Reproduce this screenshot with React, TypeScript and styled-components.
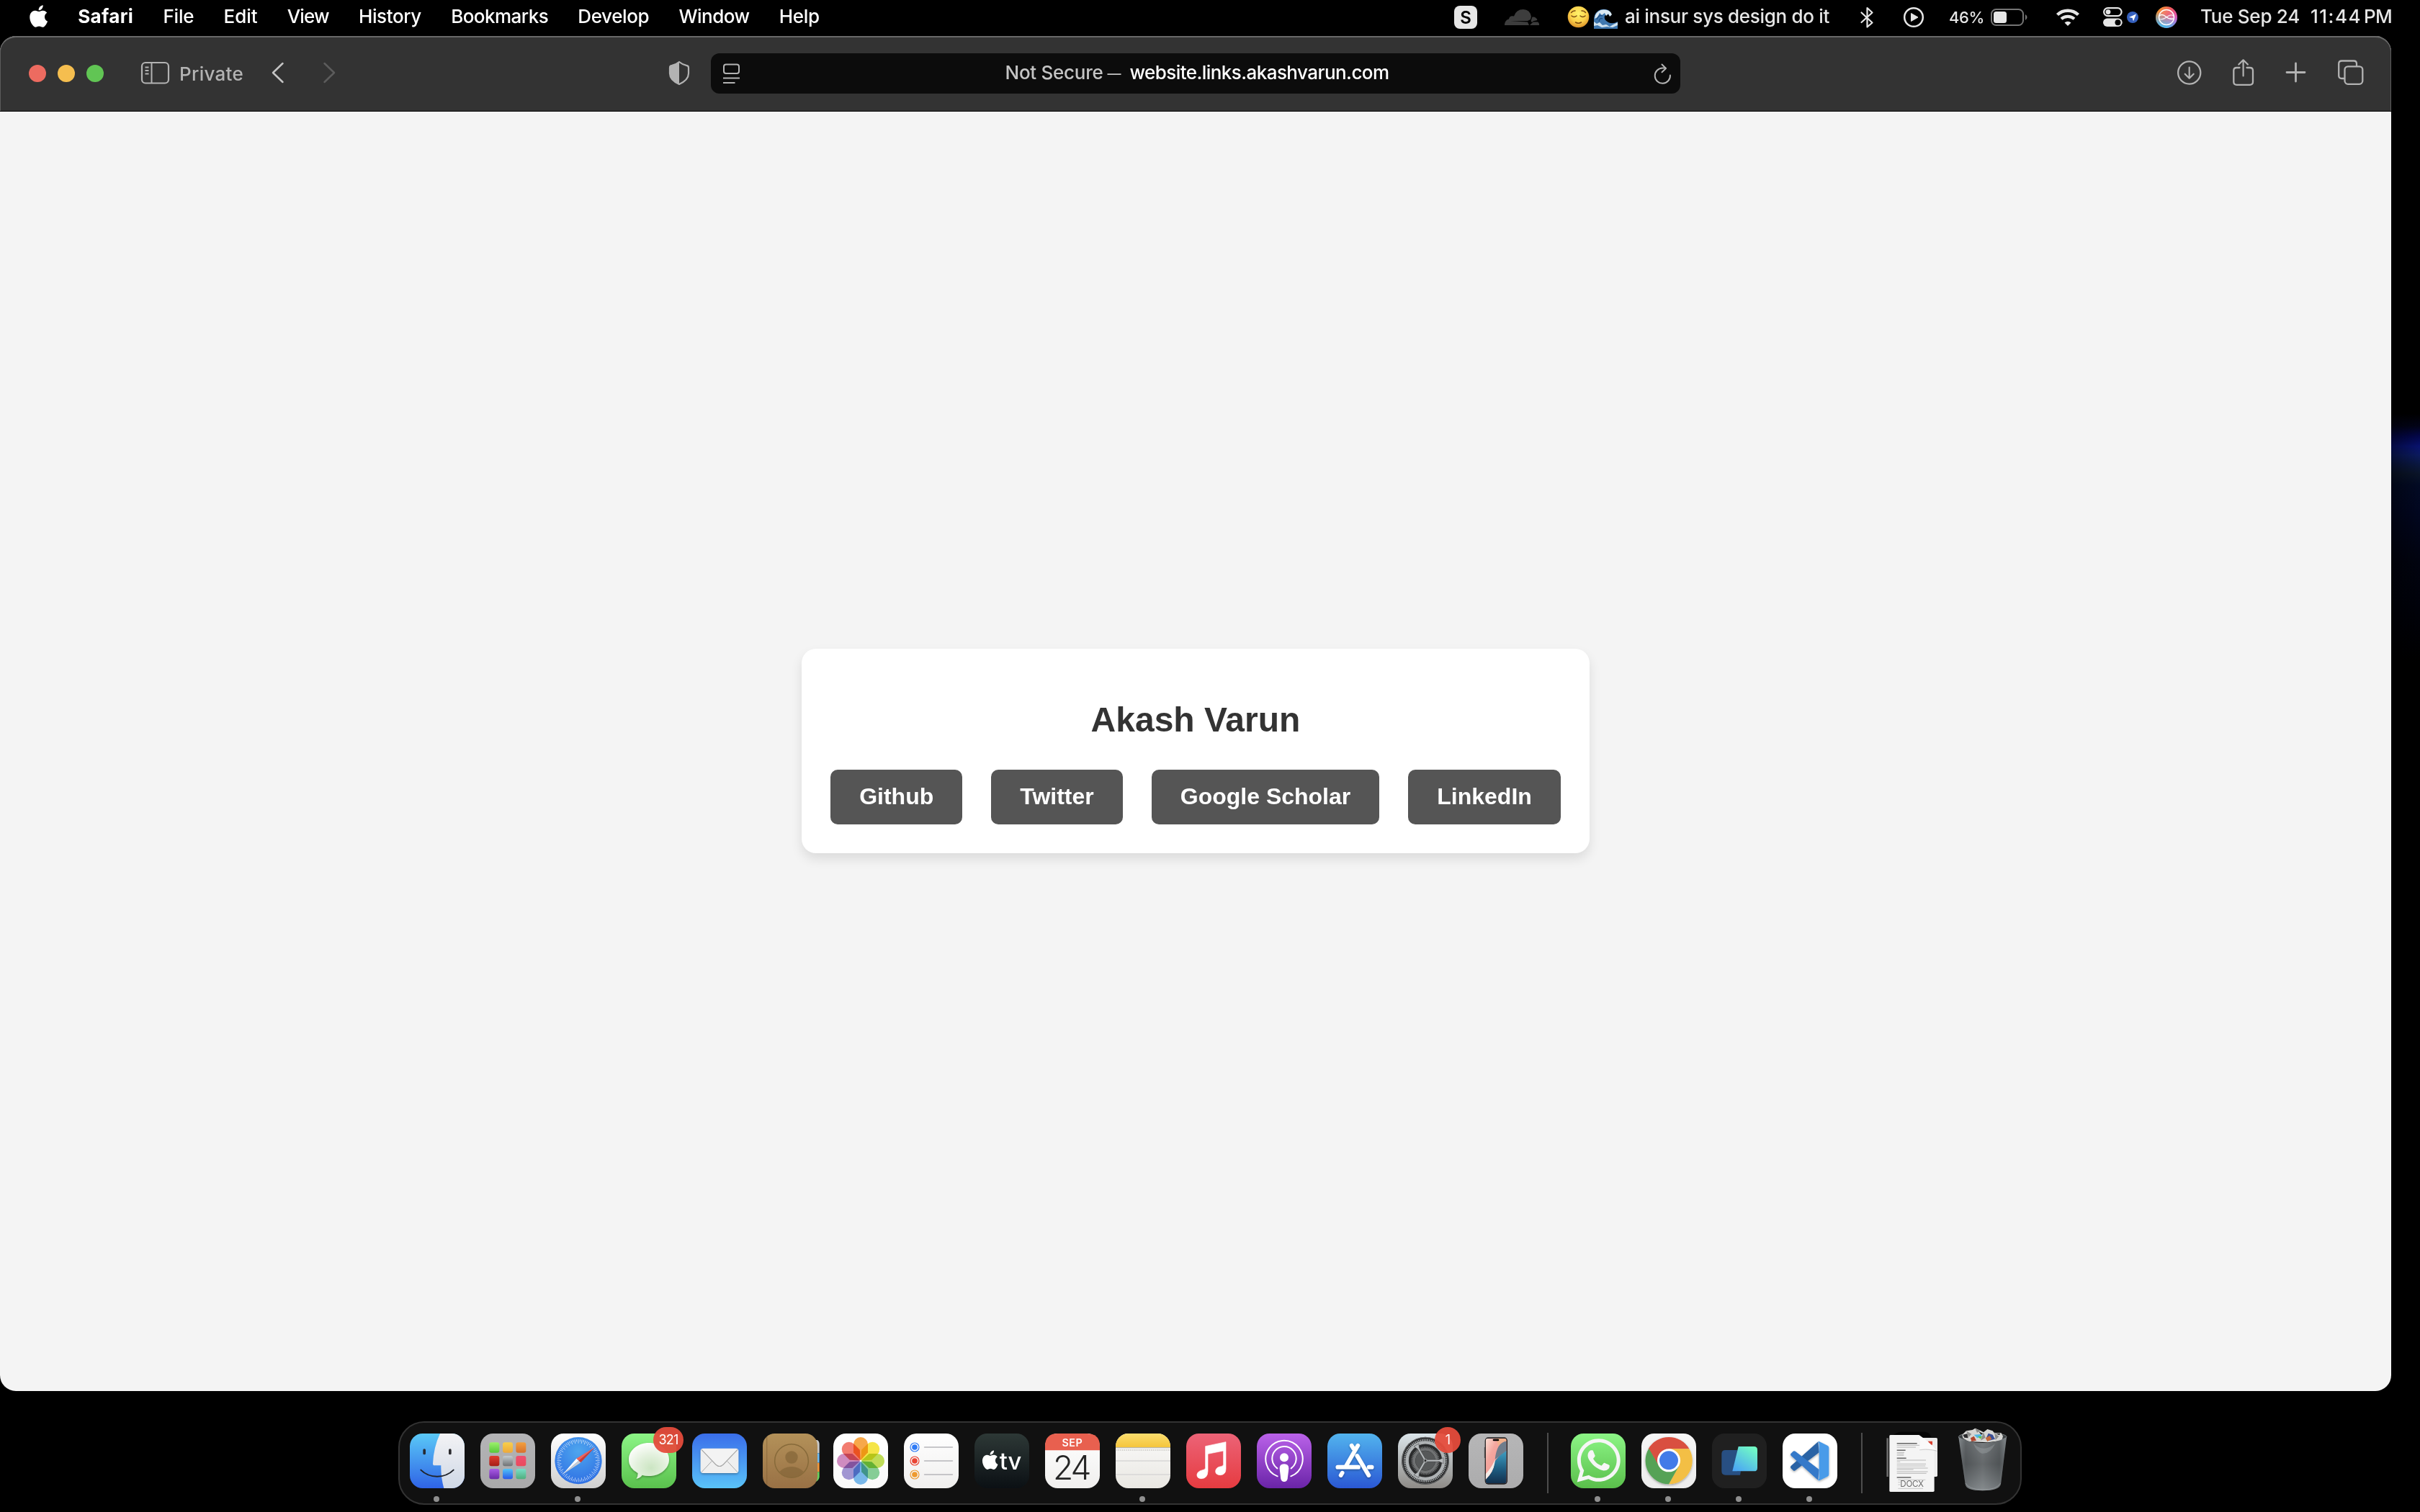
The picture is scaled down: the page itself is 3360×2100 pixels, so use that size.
import React, { useLayoutEffect, useRef, useState } from "react";
import styled, { createGlobalStyle } from "styled-components";
import { FaWhatsapp } from "react-icons/fa";

const ui = `Inter, Roboto, "Liberation Sans", sans-serif`;
const page = `"Liberation Sans", Arial, sans-serif`;

const GlobalStyle = createGlobalStyle`
  * { box-sizing: border-box; }
  html, body { margin: 0; background: #000; }
  body { overflow: hidden; }
  svg { display: block; overflow: visible; flex: none; }
`;

const Desktop = styled.main`
  display: flex;
  flex-direction: column;
  width: 3360px;
  height: 2100px;
  font-family: ${ui};
  background:
    linear-gradient(90deg, rgba(0, 0, 0, 0.4), rgba(0, 0, 0, 0) 40px) 100% 0 / 40px 2100px no-repeat,
    linear-gradient(
        180deg,
        #000 575px, #020318 592px, #03064a 606px, #08126e 620px, #0b1a5e 632px,
        #0a1740 645px, #0a1428 658px, #020a24 674px, #010620 710px, #01030f 780px, #00010a 840px, #000 920px
      ) 100% 0 / 40px 2100px no-repeat,
    #000;
`;

/* ---------- text ---------- */

const Label = styled.span<{ $size?: number; $weight?: number; $color?: string; $line?: number }>`
  flex: none;
  white-space: pre;
  font-size: ${(p) => p.$size ?? 26}px;
  font-weight: ${(p) => p.$weight ?? 500};
  line-height: ${(p) => p.$line ?? 45}px;
  color: ${(p) => p.$color ?? "#fff"};
`;

type TrackedProps = {
  children: string;
  width: number;
  size?: number;
  weight?: number;
  color?: string;
  line?: number;
};

/* A label whose tracking is adjusted so that it fills the given width. */
function Tracked({ children, width, size, weight, color, line }: TrackedProps) {
  const ref = useRef<HTMLSpanElement>(null);
  const [tracking, setTracking] = useState(0);
  useLayoutEffect(() => {
    if (ref.current) {
      setTracking((width - ref.current.getBoundingClientRect().width) / children.length);
    }
  }, [children, width]);
  return (
    <Label ref={ref} $size={size} $weight={weight} $color={color} $line={line} style={{ letterSpacing: tracking }}>
      {children}
    </Label>
  );
}

/* ---------- menu bar ---------- */

const MenuBar = styled.header`
  display: flex;
  justify-content: space-between;
  height: 50px;
  flex: none;
  padding: 0 39px 0 41px;
`;

const Menus = styled.nav`
  display: flex;
  align-items: flex-start;
  gap: 41.2px;
`;

const Status = styled.div`
  display: flex;
  align-items: flex-start;
`;

const Gap = styled.span<{ $w: number }>`
  flex: none;
  width: ${(p) => p.$w}px;
`;

const APPLE =
  "M12.152 6.896c-.948 0-2.415-1.078-3.96-1.04-2.04.027-3.91 1.183-4.961 3.014-2.117 3.675-.546 9.103 1.519 12.09 1.013 1.454 2.208 3.09 3.792 3.039 1.52-.065 2.09-.987 3.935-.987 1.831 0 2.35.987 3.96.948 1.637-.026 2.676-1.48 3.676-2.948 1.156-1.688 1.636-3.325 1.662-3.415-.039-.013-3.182-1.221-3.22-4.857-.026-3.04 2.48-4.494 2.597-4.559-1.429-2.09-3.623-2.324-4.39-2.376-2-.156-3.675 1.09-4.61 1.09zM15.53 3.83c.843-1.012 1.4-2.427 1.245-3.83-1.207.052-2.662.805-3.532 1.818-.78.896-1.454 2.338-1.273 3.714 1.338.104 2.715-.688 3.559-1.701";

type GlyphProps = { x: number; w: number; top?: number; h?: number; children: React.ReactNode };

function Glyph({ x, w, top = 0, h = 50, children }: GlyphProps) {
  return (
    <svg width={w} height={h} viewBox={`${x} ${top} ${w} ${h}`} fill="none">
      {children}
    </svg>
  );
}

const menus: [string, number, number][] = [
  ["Safari", 77, 700],
  ["File", 43, 500],
  ["Edit", 47, 500],
  ["View", 58, 500],
  ["History", 87, 500],
  ["Bookmarks", 135, 500],
  ["Develop", 99, 500],
  ["Window", 98, 500],
  ["Help", 56, 500],
];

const lit = "#e6e6e6";

function StatusItems() {
  return (
    <Status>
      <Glyph x={2020} w={32}>
        <rect x="2020" y="8" width="32" height="32" rx="8" fill={lit} />
        <text x="2036" y="32.5" textAnchor="middle" fontFamily={ui} fontSize="24" fontWeight="600" fill="#000">S</text>
      </Glyph>
      <Gap $w={38} />
      <Glyph x={2090} w={48}>
        <path d="M2090 35 Q2090 28 2096 26.5 Q2097 21 2103 22.5 Q2106 13 2116 13 Q2125 13 2127 23 L2126 27 L2122 29 L2098 29.2 L2122 30.5 L2124 35 Z" fill="#3d3d3d" />
        <path d="M2128.500 23.500 Q2134 23 2135.500 28 L2130 29.300 L2128 31 L2126.500 29.200 Z M2128 32 L2130 30.600 L2136 30.500 Q2138.500 32 2138 35 H2125 Z" fill="#3d3d3d" />
      </Glyph>
      <Gap $w={40} />
      <Glyph x={2178} w={29}>
        <defs>
          <radialGradient id="face" cx="0.5" cy="0.35" r="0.65">
            <stop offset="0" stopColor="#fff36b" />
            <stop offset="0.6" stopColor="#fbd04a" />
            <stop offset="1" stopColor="#dc9128" />
          </radialGradient>
        </defs>
        <circle cx="2192.500" cy="23.500" r="14.800" fill="url(#face)" />
        <g stroke="#7a4a10" strokeWidth="1.500" strokeLinecap="round">
          <path d="M2183 22 q3.500 3 7 0 M2195 22 q3.500 3 7 0 M2182.500 17.500 q2.500 -3 5.500 -2.500 M2197 15 q3.500 -0.500 5.500 2.500 M2188.500 31 q4 2.500 8 0" />
        </g>
      </Glyph>
      <Gap $w={7} />
      <Glyph x={2214} w={33}>
        <path d="M2214 40 V30 Q2213 20 2220 15 Q2226 11 2234 14 Q2239 17 2238 22 Q2232 18 2229 22 Q2227 27 2234 31 Q2240 34 2247 30 V40 Z" fill="#3f78b0" />
        <path d="M2216 21 Q2220 13 2228 13.500 Q2236 13 2239 20 L2236 23 L2234 19 L2231 22 L2229 18 L2225 21 L2222 18 L2219 24 L2215 26 Z" fill="#dbe9f2" />
        <path d="M2214 30 L2218 33 L2222 31 L2226 35 L2231 34 L2236 37 L2241 34 L2247 31 V35 L2240 38 L2232 37 L2225 38 L2219 35 L2214 36 Z" fill="#cfe2ef" />
        <path d="M2218 27 Q2221 20 2226 22 M2221 30 Q2222 24 2226 26" stroke="#1f4f86" strokeWidth="1.500" />
      </Glyph>
      <Gap $w={10} />
      <Tracked width={284} color={lit}>ai insur sys design do it</Tracked>
      <Gap $w={43} />
      <Glyph x={2584} w={18}>
        <path d="M2585.500 17.500 L2600.500 31.500 L2593.500 37.500 V11 L2600.500 17.500 L2585.500 31" stroke={lit} strokeWidth="2.200" strokeLinejoin="round" strokeLinecap="round" />
      </Glyph>
      <Gap $w={42} />
      <Glyph x={2644} w={28}>
        <circle cx="2658" cy="24" r="12.800" stroke={lit} strokeWidth="2.500" />
        <path d="M2654.500 18.500 V29.500 L2664 24 Z" fill={lit} stroke={lit} strokeLinejoin="round" />
      </Glyph>
      <Gap $w={35} />
      <Tracked width={49} size={22} line={48} color={lit}>46%</Tracked>
      <Gap $w={9} />
      <Glyph x={2765} w={50}>
        <rect x="2766" y="13" width="44" height="22" rx="6.500" stroke="#757575" strokeWidth="2" />
        <rect x="2769" y="16" width="18" height="16" rx="3.500" fill={lit} />
        <path d="M2813 20 q2.500 1.500 2.500 4 t-2.500 4 z" fill="#757575" />
      </Glyph>
      <Gap $w={40} />
      <Glyph x={2855} w={34}>
        <path d="M2857.500 20.500 A21 21 0 0 1 2886.500 20.500" stroke={lit} strokeWidth="4.400" />
        <path d="M2863 26.300 A13.300 13.300 0 0 1 2881 26.300" stroke={lit} strokeWidth="4.200" />
        <path d="M2867.500 31.500 A6.500 6.500 0 0 1 2876.500 31.500 L2872 36 Z" fill={lit} />
      </Glyph>
      <Gap $w={32} />
      <Glyph x={2921} w={27}>
        <rect x="2922.100" y="11.100" width="24.500" height="11" rx="5.500" stroke={lit} strokeWidth="2.200" />
        <circle cx="2928" cy="16.600" r="3.400" fill={lit} />
        <rect x="2921" y="25.500" width="26.700" height="11.500" rx="5.750" fill={lit} />
        <circle cx="2941.500" cy="31.300" r="4" fill="#000" />
      </Glyph>
      <Gap $w={6} />
      <Glyph x={2954} w={16}>
        <circle cx="2962" cy="24" r="8" fill="#3560bd" />
        <path d="M2967 19.500 L2963 29.500 L2961.700 25 L2957 24 Z" fill="#fff" />
      </Glyph>
      <Gap $w={24} />
      <Glyph x={2994} w={30}>
        <defs>
          <linearGradient id="siriA" x1="0" y1="0.1" x2="1" y2="0.8">
            <stop offset="0" stopColor="#f5a623" />
            <stop offset="0.5" stopColor="#ee5563" />
            <stop offset="1" stopColor="#d45ce8" />
          </linearGradient>
          <linearGradient id="siriB" x1="0.35" y1="1" x2="0.55" y2="0.35">
            <stop offset="0" stopColor="#3cc3f5" />
            <stop offset="1" stopColor="#3cc3f5" stopOpacity="0" />
          </linearGradient>
        </defs>
        <circle cx="3009" cy="24" r="15" fill="url(#siriA)" />
        <circle cx="3009" cy="24" r="15" fill="url(#siriB)" />
        <circle cx="3009" cy="24" r="10.500" fill="#fff" fillOpacity="0.12" stroke="#fff" strokeWidth="1.500" />
        <path d="M2999 22 Q3003 18.500 3008 23 T3018.500 26" stroke="#fff" strokeWidth="1.500" />
        <path d="M2999.500 26.500 Q3004 28 3009.500 23.500 T3019 22" stroke="#fff" strokeWidth="1.300" strokeOpacity="0.8" />
      </Glyph>
      <Gap $w={32} />
      <Tracked width={138} color={lit}>Tue Sep 24</Tracked>
      <Gap $w={15} />
      <Tracked width={71} color={lit}>11:44</Tracked>
      <Gap $w={3} />
      <Tracked width={39} color={lit}>PM</Tracked>
    </Status>
  );
}

/* ---------- browser window ---------- */

const Window = styled.section`
  display: flex;
  flex-direction: column;
  width: 3320px;
  height: 1882px;
  flex: none;
  border-radius: 22px;
  overflow: hidden;
  background: #f4f4f4;
`;

const Toolbar = styled.div`
  display: flex;
  align-items: center;
  height: 105px;
  flex: none;
  padding: 2px 39px 0 40px;
  border-bottom: 1px solid #000;
  border-radius: 22px 22px 0 0;
  background: #333;
  box-shadow: inset 0 2px 0 #686868, inset 1px 0 0 #5c5c5c, inset -1px 0 0 #5c5c5c;
`;

const Lights = styled.div`
  display: flex;
  gap: 16px;
  margin: -2px 52px 0 0;
`;

const Light = styled.span<{ $color: string }>`
  width: 24px;
  height: 24px;
  border-radius: 50%;
  background: ${(p) => p.$color};
`;

const AddressBar = styled.div`
  display: flex;
  align-items: center;
  justify-content: space-between;
  width: 1346px;
  height: 56px;
  margin-top: -2px;
  padding: 0 13px 0 17px;
  border-radius: 12px;
  background: #0c0c0c;
`;

const Address = styled.div`
  display: flex;
`;

const Viewport = styled.div`
  display: flex;
  flex: 1;
  align-items: center;
  justify-content: center;
  padding-bottom: 1px;
  font-family: ${page};
`;

const Card = styled.article`
  padding: 40px;
  border-radius: 20px;
  background: #fff;
  box-shadow: 0 8px 16px rgba(0, 0, 0, 0.1);
`;

const Name = styled.h1`
  margin: 31px 0 41px;
  font-size: 48px;
  font-weight: 700;
  line-height: 56px;
  text-align: center;
  color: #333;
`;

const Links = styled.div`
  display: flex;
  gap: 40px;
`;

const LinkButton = styled.a`
  height: 76px;
  padding: 19px 40px 21px;
  border-radius: 10px;
  background: #555;
  color: #fff;
  font-size: 32px;
  font-weight: 700;
  line-height: 36px;
`;

const tone = "#b3b3b3";

function BrowserToolbar() {
  return (
    <Toolbar>
      <Lights>
        <Light $color="#ed6b60" />
        <Light $color="#f5be4f" />
        <Light $color="#61c554" />
      </Lights>
      <Glyph x={196} w={39} top={52} h={102}>
        <rect x="197" y="87" width="37" height="28.500" rx="5" stroke={tone} strokeWidth="2.200" />
        <path d="M210.500 87 V115.500 M201.500 93.500 h5 M201.500 98 h5 M201.500 102.500 h5" stroke={tone} strokeWidth="2" />
      </Glyph>
      <Gap $w={14} />
      <Tracked width={89} color={tone} line={102}>Private</Tracked>
      <Gap $w={39} />
      <Glyph x={377} w={17} top={52} h={102}>
        <path d="M392.500 88 L379 101 L392.500 114" stroke="#c4c4c4" strokeWidth="2.500" strokeLinecap="round" strokeLinejoin="round" />
      </Glyph>
      <Gap $w={55} />
      <Glyph x={449} w={17} top={52} h={102}>
        <path d="M450.500 88 L464 101 L450.500 114" stroke="#5c5c5c" strokeWidth="2.500" strokeLinecap="round" strokeLinejoin="round" />
      </Glyph>
      <Gap $w={463} />
      <Glyph x={929} w={28} top={52} h={102}>
        <path d="M943 86 Q948 90 953 90.800 Q956 91.200 956 94 V102 Q956 111 943 117 Q930 111 930 102 V94 Q930 91.200 933 90.800 Q938 90 943 86 Z" stroke={tone} strokeWidth="2.200" strokeLinejoin="round" />
        <path d="M943 86 V117 Q930 111 930 102 V94 Q930 91.200 933 90.800 Q938 90 943 86 Z" fill={tone} />
      </Glyph>
      <Gap $w={30} />
      <AddressBar>
        <Glyph x={1004} w={23} top={74} h={56}>
          <rect x="1005" y="89.500" width="21" height="12.500" rx="3" stroke={tone} strokeWidth="2" />
          <path d="M1004 108.500 h23 M1004 115 h16.500" stroke={tone} strokeWidth="2" />
        </Glyph>
        <Address>
          <Tracked width={136} color="#c4c4c4" line={56}>Not Secure</Tracked>
          <Gap $w={6} />
          <Tracked width={24} size={19} color="#c4c4c4" line={59}>—</Tracked>
          <Gap $w={7} />
          <Tracked width={360} line={56}>website.links.akashvarun.com</Tracked>
        </Address>
        <Glyph x={2297} w={23} top={74} h={56}>
          <path d="M2318.900 104.500 A10.600 10.600 0 1 1 2308.300 94.600 H2312.500" stroke={tone} strokeWidth="2" strokeLinecap="round" />
          <path d="M2307.500 89.500 L2313 95 L2307.500 100.300" stroke={tone} strokeWidth="2" strokeLinecap="round" strokeLinejoin="round" />
        </Glyph>
      </AddressBar>
      <Gap $w={690} />
      <Glyph x={3023} w={33} top={52} h={102}>
        <circle cx="3039.700" cy="101" r="15.600" stroke={tone} strokeWidth="2.300" />
        <path d="M3039.700 93.500 V108.500 M3033.700 102.700 L3039.700 108.700 L3045.700 102.700" stroke={tone} strokeWidth="2.200" strokeLinecap="round" strokeLinejoin="round" />
      </Glyph>
      <Gap $w={44} />
      <Glyph x={3100} w={29} top={52} h={102}>
        <path d="M3109.500 94 H3105.500 Q3101.300 94 3101.300 98 V113.800 Q3101.300 117.800 3105.500 117.800 H3123.700 Q3128 117.800 3128 113.800 V98 Q3128 94 3123.700 94 H3119.500" stroke={tone} strokeWidth="2.300" strokeLinecap="round" />
        <path d="M3114.600 105.500 V84 M3108.300 89.500 L3114.600 83.300 L3120.900 89.500" stroke={tone} strokeWidth="2.200" strokeLinecap="round" strokeLinejoin="round" />
      </Glyph>
      <Gap $w={45} />
      <Glyph x={3174} w={27} top={52} h={102}>
        <path d="M3175 100.500 H3200 M3187.500 88 V113" stroke={tone} strokeWidth="2.800" strokeLinecap="round" />
      </Glyph>
      <Gap $w={45} />
      <Glyph x={3246} w={35} top={52} h={102}>
        <rect x="3255.500" y="92.300" width="24.800" height="24.500" rx="4.500" stroke={tone} strokeWidth="2.300" />
        <path d="M3272 92 V88.500 Q3272 84.500 3268 84.500 H3251.500 Q3247.200 84.500 3247.200 88.500 V105 Q3247.200 109 3251.500 109 H3255" stroke={tone} strokeWidth="2.300" />
      </Glyph>
    </Toolbar>
  );
}

/* ---------- dock ---------- */

const DockArea = styled.footer`
  display: flex;
  justify-content: center;
  padding-top: 42px;
`;

const Dock = styled.div`
  display: flex;
  gap: 22px;
  height: 116px;
  padding: 15px 14px 0;
  border: 2px solid #333;
  border-radius: 36px;
  background: #111;
`;

const Slot = styled.div<{ $running?: boolean }>`
  position: relative;
  width: 76px;
  height: 76px;
  &::after {
    content: "";
    display: ${(p) => (p.$running ? "block" : "none")};
    position: absolute;
    left: 33px;
    top: 87px;
    width: 8px;
    height: 8px;
    border-radius: 50%;
    background: #8f8f8f;
  }
`;

const Badge = styled.span<{ $left: number; $w: number }>`
  position: absolute;
  left: ${(p) => p.$left}px;
  top: -9px;
  width: ${(p) => p.$w}px;
  height: 36px;
  border-radius: 18px;
  background: rgba(229, 76, 60, 0.95);
  color: #fff;
  font-size: 18px;
  letter-spacing: -0.8px;
  line-height: 36px;
  text-align: center;
`;

const Divider = styled.span`
  width: 2px;
  height: 84px;
  margin: -1px 9px 0 11px;
  background: #4d4d4d;
`;

type TileProps = { x: number; from?: string; to?: string; id: string; children?: React.ReactNode };

/* Rounded app tile; artwork units are a third of a pixel. */
function Tile({ x, from, to, id, children }: TileProps) {
  return (
    <svg width="76" height="76" viewBox={`${x} 93 228 228`} fill="none">
      <defs>
        <linearGradient id={`${id}-bg`} x1="0" y1="0" x2="0" y2="1">
          <stop offset="0" stopColor={from ?? "#fff"} />
          <stop offset="1" stopColor={to ?? from ?? "#fff"} />
        </linearGradient>
        <clipPath id={`${id}-clip`}>
          <rect x={x} y="93" width="228" height="228" rx="53" />
        </clipPath>
        <filter id={`${id}-soft`} x="-30%" y="-30%" width="160%" height="160%">
          <feDropShadow dx="0" dy="4" stdDeviation="4" floodOpacity="0.35" />
        </filter>
      </defs>
      {from && <rect x={x} y="93" width="228" height="228" rx="53" fill={`url(#${id}-bg)`} />}
      {children}
    </svg>
  );
}

function Finder() {
  return (
    <Tile x={87} id="finder" from="#5ac9f7" to="#2f63e6">
      <defs>
        <linearGradient id="finderFace" x1="0" y1="0" x2="0" y2="1">
          <stop offset="0" stopColor="#f3f3f5" />
          <stop offset="1" stopColor="#cfd8e6" />
        </linearGradient>
      </defs>
      <g clipPath="url(#finder-clip)">
        <path d="M213 93 Q186 150 183 218 Q183 226 190 226 H217 Q216 275 229 321 H320 V93 Z" fill="url(#finderFace)" />
      </g>
      <rect x="142" y="157" width="11" height="24" rx="5" fill="#262a33" />
      <rect x="249" y="157" width="11" height="24" rx="5" fill="#2a2a2e" />
      <path d="M133 245 Q160 272 201 272 T269 245" stroke="#20242b" strokeWidth="6" strokeLinecap="round" />
    </Tile>
  );
}

const pads = [
  ["#9bf06b", "#57c83a"], ["#f9cf4c", "#eda93a"], ["#f2a03e", "#d9702c"],
  ["#e23d31", "#a51e18"], ["#c4ccd0", "#6f7173"], ["#ef4f70", "#ea4a5c"],
  ["#a95be6", "#6a2aa6"], ["#52c4f8", "#2a58e8"], ["#79dfc8", "#4fae7c"],
];

function Launchpad() {
  return (
    <Tile x={381} id="launchpad" from="#b4b4b6" to="#a9a9aa">
      {pads.map(([a, b], i) => {
        const px = [418, 474, 529][i % 3];
        const py = [130, 186, 240][Math.floor(i / 3)];
        return (
          <g key={a}>
            <linearGradient id={`pad${i}`} x1="0" y1="0" x2="0" y2="1">
              <stop offset="0" stopColor={a} />
              <stop offset="1" stopColor={b} />
            </linearGradient>
            <rect x={px} y={py} width="42" height="43" rx="9" fill={`url(#pad${i})`} />
          </g>
        );
      })}
    </Tile>
  );
}

function SafariIcon() {
  return (
    <Tile x={675} id="safari" from="#ffffff" to="#cfcfcf">
      <defs>
        <radialGradient id="safariDisc" cx="0.5" cy="0.3" r="0.7">
          <stop offset="0" stopColor="#4ea6ee" />
          <stop offset="1" stopColor="#2f70e4" />
        </radialGradient>
      </defs>
      <circle cx="789" cy="206" r="98" fill="url(#safariDisc)" />
      {Array.from({ length: 72 }, (_, i) => (
        <path key={i} d={i % 2 ? "M789 117 v10" : "M789 117 v17"} stroke="#fff" strokeOpacity="0.8" strokeWidth="2.200" transform={`rotate(${i * 5} 789 206)`} />
      ))}
      <path d="M859 149 L781 197 L790 206 Z" fill="#f0625a" />
      <path d="M859 149 L799 214 L790 206 Z" fill="#cc3a33" />
      <path d="M724 263 L781 197 L790 206 Z" fill="#fff" />
      <path d="M724 263 L799 214 L790 206 Z" fill="#c9ccd2" />
    </Tile>
  );
}

function Messages() {
  return (
    <Tile x={969} id="messages" from="#8cf586" to="#5ac14d">
      <defs>
        <radialGradient id="bubble" cx="0.55" cy="0.7" r="0.7">
          <stop offset="0" stopColor="#cbe5c2" />
          <stop offset="0.5" stopColor="#e2f0dc" />
          <stop offset="1" stopColor="#fdfefc" />
        </radialGradient>
      </defs>
      <g filter="url(#messages-soft)">
        <path d="M1083 132 C1130 132 1167 163 1167 201 C1167 239 1130 270 1083 270 Q1068 270 1055 266 Q1045 279 1030 281 Q1038 272 1037 258 Q999 238 999 201 C999 163 1036 132 1083 132 Z" fill="url(#bubble)" />
      </g>
    </Tile>
  );
}

function Mail() {
  return (
    <Tile x={1263} id="mail" from="#3a6eea" to="#5ac3f8">
      <g filter="url(#mail-soft)">
        <rect x="1298" y="155" width="158" height="103" rx="11" fill="#efefef" />
      </g>
      <path d="M1302 254 L1345 208 M1452 254 L1409 208" stroke="#a9a9a9" strokeWidth="3" />
      <path d="M1302 160 L1361 222 Q1377 237 1393 222 L1452 160" fill="#f3f3f3" stroke="#a5a5a5" strokeWidth="3.500" strokeLinejoin="round" />
    </Tile>
  );
}

function Contacts() {
  return (
    <Tile x={57} id="contacts">
      <path d="M270 120 H284 Q293 125 293 138 V175 H270 Z" fill="#c9c9c9" />
      <rect x="270" y="175" width="23" height="40" fill="#6cb9f0" />
      <rect x="270" y="215" width="23" height="38" fill="#f0953a" />
      <path d="M270 253 H293 V275 Q290 291 274 295 Z" fill="#68cf5f" />
      <defs>
        <linearGradient id="leather" x1="0" y1="0" x2="0" y2="1">
          <stop offset="0" stopColor="#b39159" />
          <stop offset="1" stopColor="#997145" />
        </linearGradient>
      </defs>
      <rect x="57" y="93" width="228" height="228" rx="50" fill="url(#leather)" />
      <path d="M74 108 V306" stroke="#7c5c31" strokeOpacity="0.5" strokeWidth="4" />
      <circle cx="177" cy="207" r="70" stroke="#876a3a" strokeWidth="4.500" />
      <circle cx="177" cy="192" r="26" fill="#866739" fillOpacity="0.75" />
      <path d="M127 252 Q148 231 177 231 T227 252 Q207 277 177 277 T127 252 Z" fill="#866739" fillOpacity="0.75" />
    </Tile>
  );
}

const petals = ["#f7a84a", "#f5e548", "#bfdc58", "#86cd96", "#79b8ea", "#a196d2", "#cf8cc0", "#f27c70"];

function Photos() {
  return (
    <Tile x={351} id="photos" from="#ffffff" to="#fafafa">
      <g style={{ isolation: "isolate" }}>
        {petals.map((c, i) => (
          <path key={c} d="M465 205 L435 172 V138 A30 30 0 0 1 495 138 V172 Z" fill={c} transform={`rotate(${i * 45} 465 207)`} style={{ mixBlendMode: "multiply" }} />
        ))}
      </g>
      <circle cx="465" cy="207" r="4" fill="#fff" />
    </Tile>
  );
}

function Reminders() {
  return (
    <Tile x={645} id="reminders" from="#ffffff" to="#f0efee">
      {["#2f7bf6", "#ea4434", "#ee9a2f"].map((c, i) => (
        <g key={c} transform={`translate(0 ${i * 57})`}>
          <circle cx="690" cy="150" r="18" stroke={c} strokeWidth="3.500" />
          <circle cx="690" cy="150" r="11.500" fill={c} />
          <path d="M731 150 H847" stroke="#b6b6ba" strokeWidth="5" strokeLinecap="round" />
        </g>
      ))}
    </Tile>
  );
}

function AppleTV() {
  return (
    <Tile x={939} id="tv" from="#2d3836" to="#0b1014">
      <svg x="971" y="162" width="68" height="82" viewBox="2 0 20.500 24">
        <path d={APPLE} fill="#fff" />
      </svg>
      <text x="1043" y="243" fontFamily={ui} fontSize="98" fontWeight="500" fill="#fff" textLength="92">tv</text>
    </Tile>
  );
}

function CalendarIcon() {
  return (
    <Tile x={1233} id="calendar" from="#ffffff" to="#f0efee">
      <path d="M1233 163 V146 Q1233 93 1286 93 H1408 Q1461 93 1461 146 V163 Z" fill="#e8604f" />
      <text x="1346" y="147" textAnchor="middle" fontFamily={ui} fontSize="43" fontWeight="600" fill="#fff" textLength="85">SEP</text>
      <text x="1266" y="285" fontFamily={ui} fontSize="138" fontWeight="300" fill="#262626" textLength="160">24</text>
    </Tile>
  );
}

function Notes() {
  return (
    <Tile x={27} id="notes" from="#fbfbfa" to="#e9e7e2">
      <defs>
        <linearGradient id="notesTop" x1="0" y1="0" x2="0" y2="1">
          <stop offset="0" stopColor="#fbde6e" />
          <stop offset="1" stopColor="#f5c53c" />
        </linearGradient>
      </defs>
      <g clipPath="url(#notes-clip)">
        <rect x="27" y="93" width="228" height="57" fill="url(#notesTop)" />
        <path d="M27 152 H255" stroke="#bcb7aa" strokeWidth="4" />
        <path d="M30 162 H255" stroke="#c3c1bd" strokeWidth="4" strokeDasharray="4 4" />
        <path d="M27 207 H255 M27 264 H255" stroke="#d8d6d6" strokeWidth="5" />
      </g>
    </Tile>
  );
}

function Music() {
  return (
    <Tile x={321} id="music" from="#ec6377" to="#e63b40">
      <path d="M401 146 L486 128 V240 Q486 265 463 266 Q442 265 443 249 Q445 233 466 230 Q476 229 476 221 V165 L411 178 V250 Q410 281 383 281 Q364 279 366 263 Q369 249 390 245 Q401 243 401 236 Z" fill="#fff" stroke="#fff" strokeWidth="2" strokeLinejoin="round" />
    </Tile>
  );
}

function Podcasts() {
  return (
    <Tile x={615} id="podcasts" from="#ba62e9" to="#6a24a8">
      <path d="M701 271 A77 77 0 1 1 757 271" stroke="#fff" strokeWidth="6" strokeLinecap="round" />
      <path d="M700 238 A50 50 0 1 1 758 238" stroke="#fff" strokeWidth="6" strokeLinecap="round" />
      <circle cx="729" cy="193" r="18" fill="#fff" />
      <path d="M729 220 Q749 220 748 240 L743 282 Q740 294 729 294 T715 282 L710 240 Q709 220 729 220 Z" fill="#fff" />
    </Tile>
  );
}

function AppStore() {
  return (
    <Tile x={909} id="appstore" from="#52b4ee" to="#2a58d4">
      <g filter="url(#appstore-soft)" stroke="#fff" strokeWidth="17" strokeLinecap="round">
        <path d="M1036 143 L988 226" />
        <path d="M1010 143 L1018 156" />
        <path d="M1033 186 L1081 267" />
        <path d="M952 233 H1038 M1082 233 H1094" />
        <path d="M971 257 L965 267" />
      </g>
    </Tile>
  );
}

function SettingsIcon() {
  return (
    <Tile x={1203} id="settings" from="#dbe5ea" to="#8e8b87">
      <circle cx="1317" cy="206" r="99" fill="#2a2b2c" />
      <circle cx="1317" cy="206" r="97" stroke="#8c8e8f" strokeWidth="2" />
      <circle cx="1317" cy="206" r="86" stroke="#a3a7a9" strokeWidth="9" strokeDasharray="4 3.500" />
      <circle cx="1317" cy="206" r="76" stroke="#aeb2b4" strokeWidth="13" />
      <circle cx="1317" cy="206" r="54" stroke="#77797a" strokeWidth="9" strokeDasharray="3.500 3" />
      <circle cx="1317" cy="206" r="47" stroke="#707273" strokeWidth="11" />
      <circle cx="1317" cy="206" r="41" fill="#565859" />
      {[0, 120, 240].map((a) => (
        <path key={a} d="M1317 202 L1375 202 L1392 194 V218 L1375 210 L1317 210 Z" fill="#b6babc" stroke="#3a3b3c" strokeWidth="1.500" transform={`rotate(${a} 1317 206)`} />
      ))}
      <circle cx="1317" cy="206" r="8" fill="#9a9d9f" />
      <circle cx="1317" cy="206" r="4" fill="#222" />
    </Tile>
  );
}

function PhoneMirroring() {
  return (
    <Tile x={-3} id="phone" from="#b6b6b7" to="#acacad">
      <defs>
        <clipPath id="phoneScreen"><rect x="68" y="113" width="87" height="188" rx="10" /></clipPath>
        <linearGradient id="phonePink" x1="0" y1="0" x2="1" y2="1">
          <stop offset="0" stopColor="#fadfd5" />
          <stop offset="0.3" stopColor="#f4a79f" />
          <stop offset="1" stopColor="#ef8d8b" />
        </linearGradient>
        <linearGradient id="phoneBlue" x1="0" y1="0" x2="0" y2="1">
          <stop offset="0" stopColor="#3fa0c4" />
          <stop offset="0.6" stopColor="#1c587c" />
          <stop offset="1" stopColor="#12304d" />
        </linearGradient>
      </defs>
      <path d="M64 150 v45" stroke="#555" strokeWidth="3" />
      <rect x="65" y="109" width="94" height="196" rx="14" fill="#1c1c1e" />
      <g clipPath="url(#phoneScreen)">
        <rect x="68" y="113" width="87" height="188" fill="url(#phonePink)" />
        <path d="M155 113 V125 Q115 128 107 200 L155 170 Z" fill="#6f7d8c" />
        <path d="M110 113 H155 V124 Q135 127 122 145 Z" fill="#f2b08a" />
        <path d="M155 165 Q110 195 104 215 Q104 250 68 285 V301 H155 Z" fill="url(#phoneBlue)" />
        <path d="M107 200 Q108 245 68 285 V262 Q98 228 107 200 Z" fill="#f3ece8" />
      </g>
      <rect x="98" y="116" width="26" height="8" rx="4" fill="#000" />
    </Tile>
  );
}

function WhatsApp() {
  return (
    <Tile x={423} id="whatsapp" from="#8cf586" to="#5abf4b">
      <FaWhatsapp x={436} y={102} size={206} color="#f6f6f6" />
    </Tile>
  );
}

function Chrome() {
  return (
    <Tile x={717} id="chrome" from="#f6f6f6" to="#ececec">
      <g filter="url(#chrome-soft)">
        <path d="M746 157 A98 98 0 0 1 916 157 H831 L790 229 Z" fill="#d9503f" />
        <path d="M916 157 A98 98 0 0 1 831 304 L873 229 L831 157 Z" fill="#f3bf45" />
        <path d="M831 304 A98 98 0 0 1 748 155 L790 229 L873 229 Z" fill="#55a257" />
      </g>
      <circle cx="831" cy="205" r="48" fill="#fff" />
      <circle cx="831" cy="205" r="39" fill="#427be8" />
    </Tile>
  );
}

function Screens() {
  return (
    <Tile x={1011} id="screens" from="#202020" to="#202020">
      <defs>
        <linearGradient id="screenFront" x1="0.15" y1="1" x2="0.8" y2="0">
          <stop offset="0" stopColor="#4aa5f5" />
          <stop offset="1" stopColor="#72fcc4" />
        </linearGradient>
      </defs>
      <path d="M1067 162 H1116 V250 H1131 L1128 266 H1067 Q1051 266 1051 250 V178 Q1051 162 1067 162 Z" fill="#284f82" />
      <path d="M1121 147 H1186 Q1200 147 1200 161 V236 Q1200 250 1186 250 H1096 Z" fill="url(#screenFront)" />
    </Tile>
  );
}

function VSCode() {
  return (
    <Tile x={1305} id="vscode" from="#ffffff" to="#ffffff">
      <g filter="url(#vscode-soft)">
        <path d="M1453 127 L1340 228 Q1336 233 1340 238 L1349 247 Q1353 250 1358 247 L1457 172 Z" fill="#2a63a5" />
        <path d="M1453 288 L1340 185 Q1336 180 1340 176 L1349 167 Q1353 164 1358 167 L1457 243 Z" fill="#3579c9" />
        <path d="M1453 127 Q1456 125 1462 128 L1492 143 Q1498 146 1498 152 V263 Q1498 269 1492 272 L1462 287 Q1456 290 1453 288 L1457 280 V135 Z" fill="#4a9be9" />
      </g>
    </Tile>
  );
}

function Documents() {
  const rows = [142, 150, 172, 178, 184, 204, 211, 220, 228, 237, 243, 252, 259];
  return (
    <Tile x={351} id="docs">
      <path d="M386 100 Q400 86 420 86 H518 Q538 88 544 108 H386 Z" fill="#050505" />
      <path d="M358 112 H366 V273 H358 Z" fill="#6a6a6a" />
      <rect x="500" y="111" width="70" height="162" rx="5" fill="#ececec" />
      <path d="M530 125 H549 V140 H540 Z" fill="#d9402f" />
      <path d="M374 99 H493 L557 163 V331 Q557 336 552 336 H374 Q370 336 370 331 V104 Q370 99 374 99 Z" fill="#f4f4f4" />
      <path d="M401 134 H485 M401 163 H437 M401 196 H440 M401 276 H460" stroke="#666" strokeWidth="4.500" />
      {rows.map((y, i) => (
        <path key={y} d={`M401 ${y} H${[525, 480, 432, 430, 430, 522, 415, 522, 520, 530, 470, 530, 524][i]}`} stroke="#9b9b9b" strokeWidth="2" />
      ))}
      <path d="M406 286 H520 M406 296 H415 M406 306 H415 M406 322 H510" stroke="#b0b0b0" strokeWidth="2" />
      <path d="M493 99 Q500 118 495 163 Q535 158 570 168 Z" fill="#b9b9b9" fillOpacity="0.6" />
      <path d="M493 99 Q498 130 495 160 Q530 154 566 163 Q540 130 493 99 Z" fill="#fafafa" />
      <text x="415" y="316" fontFamily={ui} fontSize="35" fontWeight="400" fill="#6d6d6d" textLength="98">DOCX</text>
    </Tile>
  );
}

function Trash() {
  return (
    <Tile x={645} id="trash">
      <defs>
        <linearGradient id="can" x1="0" y1="0" x2="1" y2="0">
          <stop offset="0" stopColor="#8a9094" />
          <stop offset="0.15" stopColor="#666b6e" />
          <stop offset="0.5" stopColor="#83888b" />
          <stop offset="0.85" stopColor="#64696c" />
          <stop offset="1" stopColor="#8b9195" />
        </linearGradient>
        <linearGradient id="canShade" x1="0" y1="0" x2="0" y2="1">
          <stop offset="0" stopColor="#000" stopOpacity="0" />
          <stop offset="0.5" stopColor="#1b1d1e" stopOpacity="0.25" />
          <stop offset="1" stopColor="#9ca2a5" stopOpacity="0.3" />
        </linearGradient>
      </defs>
      <ellipse cx="758" cy="107" rx="100" ry="19" fill="#3d4143" stroke="#7b8083" strokeWidth="3" />
      <path d="M673 98 L690 82 L716 78 L727 71 L748 80 L762 88 L778 75 L800 82 L808 92 L835 90 L843 104 L838 122 L780 130 L700 126 L676 112 Z" fill="#d6d6d4" />
      <path d="M690 82 L712 95 L700 108 Z M762 88 L770 110 L750 122 Z M808 92 L826 105 L812 120 Z M727 71 L735 90 L748 80 Z" fill="#8e8e8c" />
      <path d="M676 98 L694 94 L698 112 L682 110 Z M742 84 L760 94 L752 99 Z M814 94 L832 92 L828 100 Z" fill="#2b2b2d" />
      <path d="M722 98 L752 96 L754 106 L736 112 Z" fill="#4fb7e6" />
      <path d="M738 106 L756 104 L750 116 Z" fill="#66c04a" />
      <path d="M708 112 L722 104 L732 122 L712 126 Z" fill="#b2452e" />
      <path d="M782 92 L800 98 L810 116 L786 122 L774 110 Z" fill="#3b4f96" />
      <path d="M770 112 L788 102 L796 116 L778 126 Z" fill="#c4693a" />
      <path d="M658 108 Q700 132 758 132 T858 108 L834 304 Q828 331 758 331 T686 304 Z" fill="url(#can)" fillOpacity="0.96" />
      <path d="M658 108 Q700 132 758 132 T858 108 L834 304 Q828 331 758 331 T686 304 Z" fill="url(#canShade)" />
      <path d="M720 134 Q760 175 810 136 Q790 180 755 176 Q730 165 720 134 Z" fill="#a9aeb1" fillOpacity="0.35" />
      <path d="M687 300 Q700 326 758 327 T833 300" stroke="#a1a6a9" strokeOpacity="0.6" strokeWidth="3" />
    </Tile>
  );
}

export default function App() {
  return (
    <>
      <GlobalStyle />
      <Desktop>
        <MenuBar>
          <Menus>
            <svg width="26" height="45" viewBox="41 0 26 45">
              <svg x="41" y="7" width="26" height="31" viewBox="2 0 20.500 24">
                <path d={APPLE} fill="#fff" />
              </svg>
            </svg>
            {menus.map(([name, width, weight]) => (
              <Tracked key={name} width={width} weight={weight}>{name}</Tracked>
            ))}
          </Menus>
          <StatusItems />
        </MenuBar>
        <Window>
          <BrowserToolbar />
          <Viewport>
            <Card>
              <Name>Akash Varun</Name>
              <Links>
                <LinkButton>Github</LinkButton>
                <LinkButton>Twitter</LinkButton>
                <LinkButton>Google Scholar</LinkButton>
                <LinkButton>LinkedIn</LinkButton>
              </Links>
            </Card>
          </Viewport>
        </Window>
        <DockArea>
          <Dock>
            <Slot $running><Finder /></Slot>
            <Slot><Launchpad /></Slot>
            <Slot $running><SafariIcon /></Slot>
            <Slot><Messages /><Badge $left={44} $w={42}>321</Badge></Slot>
            <Slot><Mail /></Slot>
            <Slot><Contacts /></Slot>
            <Slot><Photos /></Slot>
            <Slot><Reminders /></Slot>
            <Slot><AppleTV /></Slot>
            <Slot><CalendarIcon /></Slot>
            <Slot $running><Notes /></Slot>
            <Slot><Music /></Slot>
            <Slot><Podcasts /></Slot>
            <Slot><AppStore /></Slot>
            <Slot><SettingsIcon /><Badge $left={51} $w={36}>1</Badge></Slot>
            <Slot><PhoneMirroring /></Slot>
            <Divider />
            <Slot $running><WhatsApp /></Slot>
            <Slot $running><Chrome /></Slot>
            <Slot $running><Screens /></Slot>
            <Slot $running><VSCode /></Slot>
            <Divider />
            <Slot><Documents /></Slot>
            <Slot><Trash /></Slot>
          </Dock>
        </DockArea>
      </Desktop>
    </>
  );
}
